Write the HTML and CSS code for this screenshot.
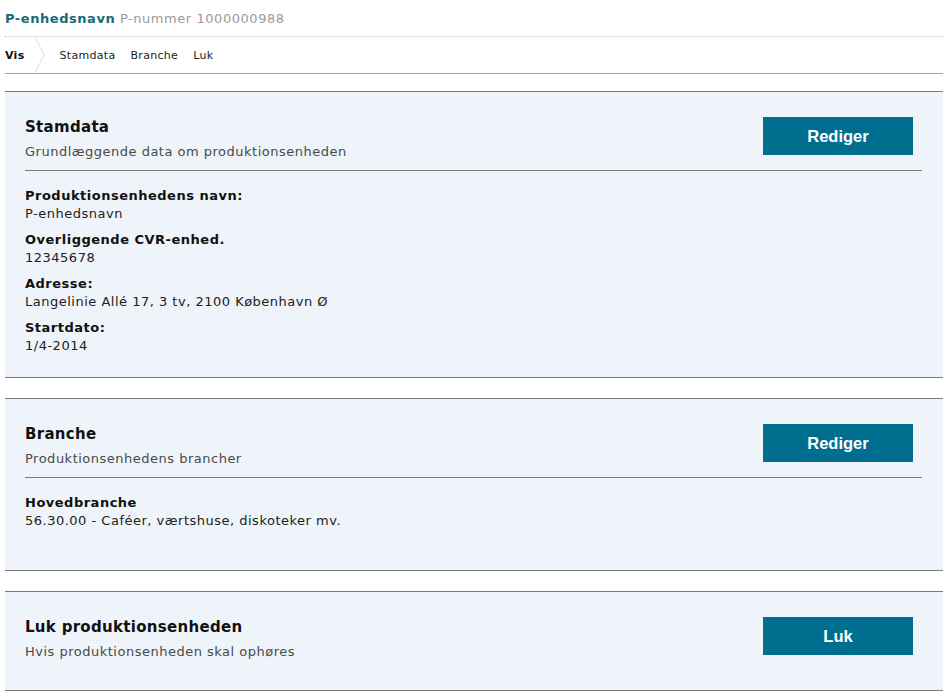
FILE: index.html
```html
<!DOCTYPE html>
<html lang="da">
<head>
<meta charset="utf-8">
<title>P-enhedsnavn</title>
<link rel="stylesheet" href="styles.css">
</head>
<body>
<div class="page">
  <div class="title-bar">
    <span class="unit-name">P-enhedsnavn</span>
    <span class="unit-number">P-nummer 1000000988</span>
  </div>
  <nav class="tabs">
    <span class="tab tab-active">Vis</span>
    <svg class="tab-sep" width="12" height="36" viewBox="0 0 12 36"><polyline points="1,0 10,18 1,36" fill="none" stroke="#e2e2e2" stroke-width="1.2"/></svg>
    <span class="tab">Stamdata</span>
    <span class="tab">Branche</span>
    <span class="tab">Luk</span>
  </nav>

  <section class="panel">
    <div class="panel-head">
      <div>
        <h2 class="panel-title">Stamdata</h2>
        <p class="panel-sub">Grundlæggende data om produktionsenheden</p>
      </div>
      <button class="btn">Rediger</button>
    </div>
    <hr class="panel-rule">
    <dl class="fields">
      <div class="field"><dt>Produktionsenhedens navn:</dt><dd>P-enhedsnavn</dd></div>
      <div class="field"><dt>Overliggende CVR-enhed.</dt><dd>12345678</dd></div>
      <div class="field"><dt>Adresse:</dt><dd>Langelinie Allé 17, 3 tv, 2100 København Ø</dd></div>
      <div class="field"><dt>Startdato:</dt><dd>1/4-2014</dd></div>
    </dl>
  </section>

  <section class="panel panel-branche">
    <div class="panel-head">
      <div>
        <h2 class="panel-title">Branche</h2>
        <p class="panel-sub">Produktionsenhedens brancher</p>
      </div>
      <button class="btn">Rediger</button>
    </div>
    <hr class="panel-rule">
    <dl class="fields">
      <div class="field"><dt>Hovedbranche</dt><dd>56.30.00 - Caféer, værtshuse, diskoteker mv.</dd></div>
    </dl>
  </section>

  <section class="panel panel-close">
    <div class="panel-head">
      <div>
        <h2 class="panel-title">Luk produktionsenheden</h2>
        <p class="panel-sub">Hvis produktionsenheden skal ophøres</p>
      </div>
      <button class="btn">Luk</button>
    </div>
  </section>
</div>
</body>
</html>
```

FILE: styles.css
```css
html, body {
  margin: 0;
  padding: 0;
  background: #ffffff;
}

body {
  font-family: "DejaVu Sans", Verdana, sans-serif;
  color: #1a1a1a;
}

.page {
  padding: 0 6px 0 5px;
}

.title-bar {
  box-sizing: border-box;
  height: 37px;
  padding-top: 10px;
  line-height: 18px;
  font-size: 13px;
  letter-spacing: 0.55px;
  border-bottom: 1px dotted #c8c8c8;
}

.unit-name {
  font-weight: bold;
  color: #17697a;
}

.unit-number {
  color: #9a9a9a;
}

.tabs {
  display: flex;
  align-items: center;
  height: 36px;
  border-bottom: 1px solid #a6a6a6;
  font-size: 11px;
  letter-spacing: 0.3px;
  color: #222;
}

.tab {
  margin-right: 15px;
  line-height: 14px;
  padding-top: 2px;
}

.tab-active {
  font-weight: bold;
  color: #111;
  margin-right: 9px;
}

.tab-sep {
  display: block;
  margin-right: 14px;
  flex: none;
}

.panel {
  margin-top: 17px;
  background: #eef4f9;
  border-top: 1px solid #7a7a7a;
  border-bottom: 1px solid #7a7a7a;
  padding: 25px 21px 22px 20px;
}

.panel + .panel {
  margin-top: 20px;
}

.panel-branche {
  padding-bottom: 40px;
}

.panel-close {
  padding-bottom: 29px;
}

.panel-head {
  display: flex;
  justify-content: space-between;
  align-items: flex-start;
}

.panel-title {
  margin: 0;
  font-size: 15px;
  line-height: 20px;
  font-weight: bold;
  letter-spacing: 0.3px;
  color: #111;
}

.panel-sub {
  margin: 6px 0 0;
  font-size: 13px;
  line-height: 18px;
  letter-spacing: 0.5px;
  color: #4a4a4a;
}

.btn {
  margin: 0 9px 0 0;
  width: 150px;
  height: 38px;
  border: none;
  background: #006f8f;
  color: #ffffff;
  font-family: "Liberation Sans", Arial, sans-serif;
  font-weight: bold;
  font-size: 16.5px;
  cursor: pointer;
}

.panel-rule {
  margin: 9px 0 0;
  border: none;
  border-top: 1px solid #7a7a7a;
  height: 0;
}

.fields {
  margin: 16px 0 0;
  font-size: 13px;
  line-height: 18px;
  letter-spacing: 0.5px;
}

.field + .field {
  margin-top: 8px;
}

.field dt {
  font-weight: bold;
  color: #111;
}

.field dd {
  margin: 0;
  color: #222;
}
```
